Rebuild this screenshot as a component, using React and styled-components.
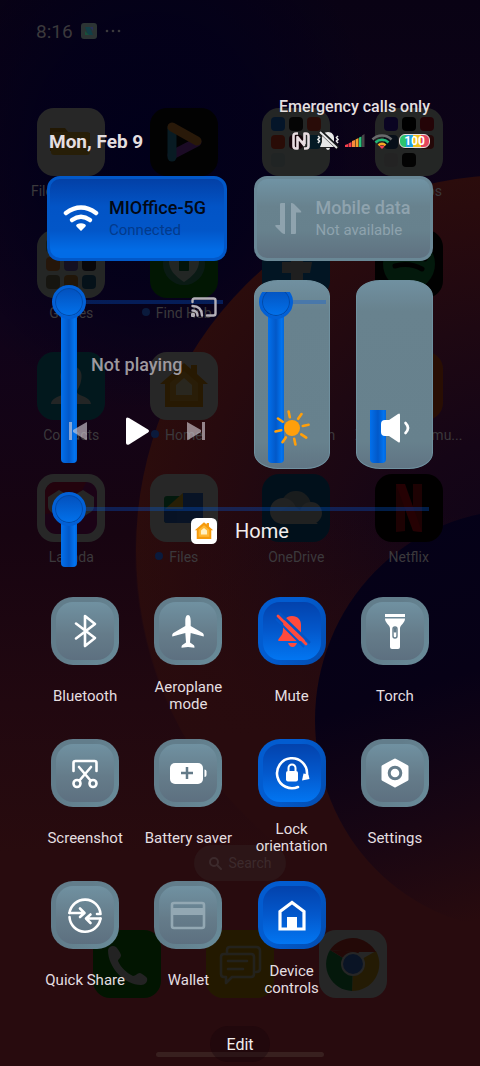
import React, { useState } from "react";
import styled, { createGlobalStyle, css } from "styled-components";

const App = () => {
  return (
    <>
      <GlobalStyle />
      <Screen>
        <Wallpaper />
        <HomeScreen />
        <ControlCentre />
      </Screen>
    </>
  );
};

const Wallpaper = () => (
  <StyledWallpaper viewBox="0 0 480 1066" preserveAspectRatio="none" aria-hidden="true">
    <defs>
      <linearGradient id="base" x1="0" y1="0" x2="0" y2="1">
        <stop offset="0" stopColor="#090214" />
        <stop offset="0.3" stopColor="#10031a" />
        <stop offset="0.5" stopColor="#170411" />
        <stop offset="0.66" stopColor="#210810" />
        <stop offset="0.8" stopColor="#280b0e" />
        <stop offset="1" stopColor="#280b0e" />
      </linearGradient>
      <radialGradient id="navy">
        <stop offset="0" stopColor="#01001a" />
        <stop offset="0.5" stopColor="#02001a" stopOpacity="0.8" />
        <stop offset="1" stopColor="#02001a" stopOpacity="0" />
      </radialGradient>
      <radialGradient id="planet" cx="0.5" cy="0.5" r="0.5">
        <stop offset="0" stopColor="#100418" />
        <stop offset="0.3" stopColor="#150516" />
        <stop offset="0.6" stopColor="#1e0812" />
        <stop offset="0.85" stopColor="#270a0e" />
        <stop offset="1" stopColor="#2b0c0c" />
      </radialGradient>
      <linearGradient id="planetFade" x1="0" y1="0" x2="0" y2="1">
        <stop offset="0.45" stopColor="#280b0e" stopOpacity="0" />
        <stop offset="0.75" stopColor="#280b0e" />
      </linearGradient>
      <linearGradient id="moon" x1="0.2" y1="0" x2="0.5" y2="1">
        <stop offset="0" stopColor="#040118" />
        <stop offset="0.4" stopColor="#070116" />
        <stop offset="0.7" stopColor="#180613" />
        <stop offset="0.95" stopColor="#280b0e" />
      </linearGradient>
    </defs>
    <rect width="480" height="1066" fill="url(#base)" />
    <ellipse cx="150" cy="150" rx="230" ry="260" fill="url(#navy)" />
    <circle cx="511" cy="550" r="375" fill="url(#planet)" />
    <circle cx="511" cy="550" r="376" fill="url(#planetFade)" />
    <ellipse cx="520" cy="720" rx="205" ry="210" fill="url(#moon)" />
  </StyledWallpaper>
);

/* ---------- home screen behind the panel ---------- */

const folder = (colors) => (
  <>
    <rect width="68" height="68" rx="17" fill="#e4ece8" />
    {colors.map((color, i) => (
      <rect
        key={i}
        x={9 + (i % 3) * 18}
        y={9 + Math.floor(i / 3) * 18}
        width="14"
        height="14"
        rx="4"
        fill={color}
      />
    ))}
  </>
);

const house = (
  <>
    <path d="M10 32 34 11l7 6v-4h6v9l11 10h-5v23H15V32z" fill="#f59a0c" />
    <path d="M20 49V31l14-12 14 12v18z" fill="#ffb733" />
    <path d="M26 43V33l8-7 8 7v10z" fill="#fff1c4" />
  </>
);

const apps = [
  {
    name: "File Manager",
    art: (
      <>
        <rect width="68" height="68" rx="17" fill="#f4f4f4" />
        <path d="M13 20h15l4 5h21v18H13z" fill="#d59411" />
        <rect x="14" y="24" width="39" height="23" rx="3" fill="#f3bd2b" />
      </>
    ),
  },
  {
    name: "Video",
    covered: true,
    art: (
      <>
        <rect width="68" height="68" rx="17" fill="#0b0b0e" />
        <g fill="none" strokeWidth="9" strokeLinecap="round">
          <path d="M22 47 47 34" stroke="#a645e8" />
          <path d="M22 20v29" stroke="#2fa8d8" />
          <path d="M22 19 47 33" stroke="#ff9c38" />
        </g>
      </>
    ),
  },
  {
    name: "Tools",
    covered: true,
    art: folder(["#1b86ff", "#222", "#ff4d32", "#ff4b2b", "#7a1535", "#1c9ce0", "#c9e2de"]),
  },
  {
    name: "More apps",
    art: folder(["#3d1bd2", "#000", "#e01b2c", "#2a5f9f", "#3d7a48", "#e03030", "#ddd", "#111"]),
  },
  {
    name: "Games",
    art: folder([
      "#7a8", "#a65", "#468", "#e58a40", "#7a66d0", "#33293f", "#8b8364", "#d08a36", "#226d9f",
    ]),
  },
  {
    name: "Find Hub",
    isNew: true,
    art: (
      <>
        <rect width="68" height="68" rx="17" fill="#0a8d12" />
        <circle cx="34" cy="34" r="21" fill="#3da580" />
        <path d="M34 52c-9-6-15-12-15-21a15 15 0 0 1 30 0c0 9-6 15-15 21z" fill="#d5eee4" />
        <rect x="29" y="26" width="10" height="15" rx="1" fill="#0a7d42" />
      </>
    ),
  },
  {
    name: "Facebook",
    covered: true,
    art: (
      <>
        <rect width="68" height="68" rx="17" fill="#0f86dc" />
        <path d="M29 53V43h-9V32h9v-4q0-14 20-12v11q-8 0-8 5h9l-2 11h-7v10z" fill="#c4c4c4" />
      </>
    ),
  },
  {
    name: "Spotify",
    covered: true,
    art: (
      <>
        <rect width="68" height="68" rx="17" fill="#060806" />
        <circle cx="34" cy="34" r="26" fill="#109c48" />
        <g fill="none" stroke="#050805" strokeWidth="5" strokeLinecap="round">
          <path d="M19 26q16-5 31 3" />
          <path d="M20 36q14-4 27 3" />
        </g>
      </>
    ),
  },
  {
    name: "Contacts",
    art: (
      <>
        <rect width="68" height="68" rx="17" fill="#0c99b5" />
        <path d="M34 14c9 0 12 7 10 15-1 6-4 8-4 11 0 4 13 4 14 12H14c1-8 14-8 14-12 0-3-3-5-4-11-2-8 1-15 10-15z" fill="#d9e6e8" />
      </>
    ),
  },
  {
    name: "Home",
    isNew: true,
    art: (
      <>
        <rect width="68" height="68" rx="17" fill="#f4f4f4" />
        {house}
      </>
    ),
  },
  { name: "Subscription", art: <rect width="68" height="68" rx="17" fill="#2b1018" /> },
  { name: "Xiaomi Commu...", art: <rect width="68" height="68" rx="17" fill="#ff5a14" /> },
  {
    name: "Lazada",
    art: (
      <>
        <rect width="68" height="68" rx="17" fill="#f4f4f4" />
        <rect x="8" y="8" width="52" height="52" rx="11" fill="#a8108a" />
        <path d="M8 40V19A11 11 0 0 1 19 8h30c-8 20-20 30-41 32z" fill="#d81450" />
        <path d="M34 50 14 38q-3-2-3-6v-9l11-7 12 7 12-7 11 7v9q0 4-3 6z" fill="#eee" />
      </>
    ),
  },
  {
    name: "Files",
    isNew: true,
    art: (
      <>
        <rect width="68" height="68" rx="17" fill="#f4f4f4" />
        <rect x="14" y="22" width="25" height="27" rx="3" fill="#119a54" />
        <rect x="14" y="34" width="39" height="15" rx="3" fill="#2c6fe0" />
        <path d="M33 19h20v30H27V35z" fill="#3479ea" />
        <path d="M33 19v16H15z" fill="#f7c01d" />
      </>
    ),
  },
  {
    name: "OneDrive",
    art: (
      <>
        <rect width="68" height="68" rx="17" fill="#0864a8" />
        <circle cx="34" cy="32" r="15" fill="#9fb0b8" />
        <circle cx="21" cy="37" r="13" fill="#d0d4d6" />
        <circle cx="49" cy="39" r="11" fill="#c6cdd0" />
        <path d="M18 50V38l12-8 26 20z" fill="#c6cdd0" />
      </>
    ),
  },
  {
    name: "Netflix",
    art: (
      <>
        <rect width="68" height="68" rx="17" fill="#080202" />
        <path d="M21 10h9v47l-9 1z" fill="#b50a14" />
        <path d="M38 10h9v48l-9-1z" fill="#b50a14" />
        <path d="M21 10h9l17 48-9-1z" fill="#e50914" />
      </>
    ),
  },
];

const dock = [
  {
    name: "Phone",
    art: (
      <>
        <rect width="68" height="68" rx="17" fill="#0d8408" />
        <path
          d="M15 20c1-4 5-5 8-3 2 2 4 5 5 8 0 3-3 4-3 6 3 7 9 12 15 15 3 0 4-3 7-3 3 1 5 3 7 5 1 4-2 7-6 7C32 55 15 38 15 20z"
          fill="#ddd"
        />
      </>
    ),
  },
  {
    name: "Messages",
    art: (
      <>
        <rect width="68" height="68" rx="17" fill="#d89e00" />
        <g fill="none" stroke="#ddd6b8" strokeWidth="2.5" strokeLinejoin="round" strokeLinecap="round">
          <path d="M21 24v-4q0-3 3-3h26q4 0 4 4v18q0 3-4 3" />
          <path d="M18 24h27q3 0 3 3v17q0 3-3 3H26l-6 6v-6h-2q-3 0-3-3V27q0-3 3-3z" />
          <path d="M22 31h19M22 39h15" />
        </g>
      </>
    ),
  },
  {
    name: "Chrome",
    art: (
      <>
        <rect width="68" height="68" rx="17" fill="#eee" />
        <path d="M34 34 57 21A27 27 0 0 1 33 61z" fill="#e0a81c" />
        <path d="M34 34 33 61A27 27 0 0 1 11 20z" fill="#179447" />
        <path d="M11 20a27 27 0 0 1 46 2H34z" fill="#d8392b" />
        <path d="M11 20 34 34 40 22z" fill="#d8392b" />
        <circle cx="34" cy="34" r="12" fill="#eee" />
        <circle cx="34" cy="34" r="10" fill="#3f7be8" />
      </>
    ),
  },
];

const HomeScreen = () => (
  <StyledHome>
    <HomeStatus>
      8:16
      <NoticeIcon viewBox="0 0 16 16" aria-hidden="true">
        <rect width="16" height="16" rx="3" fill="#2c3434" />
        <path d="M4 4h5l3 8H7z" fill="#123e46" />
        <path d="M4 12V8l4 4z" fill="#18503a" />
        <path d="M12 4v4L9 4z" fill="#28305c" />
      </NoticeIcon>
      <MoreDots viewBox="0 0 16 4" aria-hidden="true">
        <circle cx="2" cy="2" r="1.3" />
        <circle cx="8" cy="2" r="1.3" />
        <circle cx="14" cy="2" r="1.3" />
      </MoreDots>
    </HomeStatus>
    <AppGrid>
      {apps.map((app) => (
        <AppItem key={app.name}>
          <AppArt viewBox="0 0 68 68" role="img" aria-label={app.name}>
            {app.art}
          </AppArt>
          {!app.covered && <AppName $isNew={app.isNew}>{app.name}</AppName>}
        </AppItem>
      ))}
    </AppGrid>
    <SearchPill>
      <svg width="14" height="14" viewBox="0 0 14 14" fill="none" stroke="currentColor" strokeWidth="2" strokeLinecap="round" aria-hidden="true">
        <circle cx="6" cy="6" r="4" />
        <path d="m9 9 4 4" />
      </svg>
      Search
    </SearchPill>
    <Dock>
      {dock.map((app) => (
        <AppArt key={app.name} viewBox="0 0 68 68" role="img" aria-label={app.name}>
          {app.art}
        </AppArt>
      ))}
    </Dock>
    <NavHandle />
  </StyledHome>
);

/* ---------- control centre ---------- */

const line = {
  fill: "none",
  stroke: "currentColor",
  strokeLinecap: "round",
  strokeLinejoin: "round",
};

const toggles = [
  {
    label: "Bluetooth",
    icon: <path {...line} strokeWidth="2.6" d="M9 10.500 28 25 18 33V3l10 8L9 25.500" />,
  },
  {
    label: "Aeroplane mode",
    icon: (
      <path
        fill="currentColor"
        d="M18 2c2 0 2.700 3 2.700 6v5l12 7c1 .7 1.300 2 1 3.600l-13-3.600-.7 9.500 3.600 2.500c.8.600 1 1.600.8 2.800L18 34l-6.400.8c-.2-1.200 0-2.200.8-2.800l3.600-2.500-.7-9.500-13 3.600c-.3-1.600 0-2.900 1-3.600l12-7V8c0-3 .7-6 2.700-6z"
      />
    ),
  },
  {
    label: "Mute",
    on: true,
    icon: (
      <g fill="#ff4a3d">
        <path d="M18 3c6 0 9 4 9 9v8c0 3 4 5 4 8H5c-2 0 0-3 2-5 2-3 2-5 2-9C9 7 12 3 18 3z" />
        <path d="M14 30h9c-1 2-2 4-4.500 4S15 32 14 30z" />
        <path d="M5 0 36 30" stroke="#0354c4" strokeWidth="2.500" />
        <path d="M2 6 30 34" stroke="#0358cc" strokeWidth="2" />
        <path d="M4 3 32 31" stroke="#ff4a3d" strokeWidth="2.800" strokeLinecap="round" />
      </g>
    ),
  },
  {
    label: "Torch",
    icon: (
      <>
        <path fill="currentColor" d="M8 1h20v3H8zM8 5.500h20c0 5-5 6-5 10V34q0 2-2 2h-6q-2 0-2-2V15.500c0-4-5-5-5-10z" />
        <rect x="16" y="14" width="4" height="11" rx="2" fill="#fff" stroke="#657d8b" strokeWidth="1.400" />
        <rect x="16.500" y="14.500" width="3" height="5" rx="1" fill="#657d8b" />
      </>
    ),
  },
  {
    label: "Screenshot",
    icon: (
      <g {...line} strokeWidth="2.600">
        <path d="M6.500 16V8q0-2 2-2h19q2 0 2 2v8" />
        <path d="M12 12l11.500 13.500M24 12 12.500 25.500" />
        <circle cx="10" cy="28.500" r="3.500" />
        <circle cx="26" cy="28.500" r="3.500" />
      </g>
    ),
  },
  {
    label: "Battery saver",
    icon: (
      <>
        <rect x="0" y="8" width="33" height="21" rx="5" fill="currentColor" />
        <path d="M34.500 14.500q2 0 2 2v3.500q0 2-2 2z" fill="currentColor" />
        <path d="M17 12v12M11 18h12" stroke="#637a88" strokeWidth="2.500" />
      </>
    ),
  },
  {
    label: "Lock orientation",
    on: true,
    icon: (
      <>
        <path {...line} strokeWidth="2.600" d="M24 32A15 15 0 1 1 33 19" />
        <path d="M28 25.500 35.500 24l-1-4.500-5-1z" fill="currentColor" />
        <rect x="12" y="16" width="12" height="10.500" rx="2" fill="currentColor" />
        <path {...line} strokeWidth="2" d="M14.500 16v-3a3.500 3.500 0 0 1 7 0v3" />
      </>
    ),
  },
  {
    label: "Settings",
    icon: (
      <>
        <path {...line} fill="currentColor" strokeWidth="3" d="M18 5 30 11.500v13L18 31 6 24.500v-13z" />
        <circle cx="18" cy="18" r="5.800" fill="none" stroke="#657c8a" strokeWidth="3" />
      </>
    ),
  },
  {
    label: "Quick Share",
    icon: (
      <g {...line} strokeWidth="2.600">
        <path d="M2.500 16A15.600 15.600 0 0 1 33.500 17H30" />
        <path d="M2.500 16H17M13 11.500l4.500 4.500-4.500 4" />
        <path d="M2.500 20a15.600 15.600 0 0 0 31 1.500" />
        <path d="M33.500 21.500H19.500M23.500 17.500l-4.500 4 4.500 4.500" />
      </g>
    ),
  },
  {
    label: "Wallet",
    dim: true,
    icon: (
      <>
        <rect x="2" y="6" width="32" height="25" rx="2" fill="none" stroke="currentColor" strokeWidth="2.600" />
        <path d="M2 11h32v7H2z" fill="currentColor" />
      </>
    ),
  },
  {
    label: "Device controls",
    on: true,
    icon: (
      <>
        <path d="M6 32V14.500l12-9 12 9V32z" fill="none" stroke="currentColor" strokeWidth="3.200" />
        <path d="M13 20h10v12H13z" fill="currentColor" />
      </>
    ),
  },
];

const StatusIcons = () => (
  <IconRow aria-label="Status">
    <svg width="19" height="18" viewBox="0 0 19 18">
      <path
        d="M6 1.500H4q-2.500 0-2.500 2.500v10q0 2.500 2.500 2.500h1.500V5l6.500 8V8M12 16.500h2q2.500 0 2.500-2.500V4q0-2.500-2.500-2.500h-1.500V12"
        fill="none"
        stroke="#e8dce0"
        strokeWidth="2.600"
        strokeLinejoin="round"
      />
    </svg>
    <svg width="22" height="20" viewBox="0 0 22 20" fill="#e8e8e8">
      <path d="M11 1c4 0 6 3 6 6v4l2 5H3l2-5V7c0-3 2-6 6-6zM9 17h4q-.5 2-2 2t-2-2z" />
      <path d="m3 0 18 17" stroke="#161a1a" strokeWidth="4" />
      <path d="m3 1 17 16" stroke="#e8e8e8" strokeWidth="1.800" />
      <path d="m1 5 1.500 1.500L1 8.500 2.500 10 1 12M21 5l-1.500 1.500L21 8.500 19.500 10 21 12" fill="none" stroke="#e8e8e8" strokeWidth="1.600" />
    </svg>
    <svg width="20" height="14" viewBox="0 0 20 14">
      <path d="M0 13V11l3-1v3z" fill="#f6404e" />
      <path d="M3.500 13V9.500l3-1.500v5z" fill="#f6404e" />
      <path d="M7 13V7l3-1v7z" fill="#f88a3a" />
      <path d="M10.500 13V5.500l3-1.500v9z" fill="#f0a02c" />
      <path d="M14 13V3.500l2.500-1V13z" fill="#2ac27a" />
      <path d="M17 13V1.500L19.500 0v13z" fill="#4a4648" />
    </svg>
    <svg width="22" height="15" viewBox="0 0 22 15" fill="none" strokeWidth="2.500">
      <path d="M1.500 5.500a13.500 13.500 0 0 1 19 0" stroke="#6a6a6c" />
      <path d="M4.500 8.500a9.200 9.200 0 0 1 13 0" stroke="#22b877" />
      <path d="M7.500 11.300a5 5 0 0 1 7 0" stroke="#f5a623" />
      <path d="m11 15-2.500-2.500q2.500-2 5 0z" fill="#f6404e" />
    </svg>
    <Battery>100</Battery>
  </IconRow>
);

const ControlCentre = () => {
  const [brightness, setBrightness] = useState(100);
  const [volume, setVolume] = useState(31);

  return (
    <Panel>
      <Header>
        <Carrier>Emergency calls only</Carrier>
        <DateRow>
          <DateText>Mon, Feb 9</DateText>
          <StatusIcons />
        </DateRow>
      </Header>

      <Cards>
        <WideTile type="button" $on>
          <WideIcon viewBox="0 0 36 36" aria-hidden="true">
            <g fill="none" stroke="#fff" strokeWidth="4.500" strokeLinecap="round">
              <path d="M3 12q15-11 30 0" />
              <path d="M9 19q9-6.500 18 0" />
            </g>
            <path d="M18 30 13.500 25.500q-1-1.500.5-2.200 4-2 8 0 1.500.7.5 2.200z" fill="#fff" />
          </WideIcon>
          <span>
            <TileTitle>MIOffice-5G</TileTitle>
            <TileNote>Connected</TileNote>
          </span>
        </WideTile>
        <WideTile type="button">
          <WideIcon viewBox="0 0 36 36" aria-hidden="true">
            <path d="M10 3q0-1 1.500-1H15v31q-2 0-3-1l-6.500-6.500Q4.500 24 6 24h4zM21 2q2 0 3 1l7 7q1 1.500-.5 1.500H26V32q0 1-1 1h-4z" fill="currentColor" />
          </WideIcon>
          <span>
            <TileTitle>Mobile data</TileTitle>
            <TileNote>Not available</TileNote>
          </span>
        </WideTile>

        <Media>
          <Stick>
            <Rail />
            <Bar />
            <Knob />
          </Stick>
          <CastButton type="button" aria-label="Cast">
            <svg width="26" height="20" viewBox="0 0 26 20" fill="none" stroke="#b4b0b8" strokeWidth="2.400" strokeLinecap="round" aria-hidden="true">
              <path d="M1.500 5V3.500q0-2 2-2h19q2 0 2 2v13q0 2-2 2H16" />
              <path d="M1.500 9q9 0 9.500 9.500M1.500 13.500q5 0 5 5" />
              <circle cx="2" cy="18" r="1" />
            </svg>
          </CastButton>
          <MediaTitle>Not playing</MediaTitle>
          <MediaButtons>
            <MediaButton type="button" aria-label="Previous">
              <svg width="20" height="20" viewBox="0 0 20 20" fill="currentColor" aria-hidden="true">
                <path d="M1 1h3v18H1zM18 1.500q1-1 1 .5v16q0 1.500-1 1L5 11V9z" />
              </svg>
            </MediaButton>
            <MediaButton type="button" aria-label="Play" $main>
              <svg width="26" height="28" viewBox="0 0 26 28" fill="currentColor" aria-hidden="true">
                <path d="M2 2q0-2.500 3-1l19 11.500q2 1.500 0 3L5 27.500q-3 1-3-1.500z" />
              </svg>
            </MediaButton>
            <MediaButton type="button" aria-label="Next">
              <svg width="20" height="20" viewBox="0 0 20 20" fill="currentColor" aria-hidden="true">
                <path d="M16 1h3v18h-3zM2 1.500q-1-1-1 .5v16q0 1.500 1 1L15 11V9z" />
              </svg>
            </MediaButton>
          </MediaButtons>
        </Media>

        <Levels>
          <Level>
            <LevelClip>
              <Stick $inset>
                <Rail />
                <Bar />
                <Knob />
              </Stick>
            </LevelClip>
            <LevelIcon viewBox="0 0 36 36" aria-hidden="true">
              <circle cx="18" cy="18" r="8" fill="#ff9f0a" />
              <g stroke="#ff9f0a" strokeWidth="2.600" strokeLinecap="round">
                <path d="M15.800 7.300 14.600 1.500M24.200 8.800 27.500 4M28.800 15.900 34.600 14.700M27.300 24.300 32.200 27.600M20.200 28.800 21.400 34.500M11.800 27.400 8.500 32.200M7.200 20.200 1.500 21.400M8.700 11.800 4 8.500" />
              </g>
            </LevelIcon>
            <LevelInput
              aria-label="Brightness"
              value={brightness}
              onChange={(e) => setBrightness(e.target.value)}
            />
          </Level>
          <Level>
            <LevelClip>
              <VolumeFill style={{ height: `${volume}%` }} />
            </LevelClip>
            <LevelIcon viewBox="0 0 36 36" aria-hidden="true">
              <path d="M4 14q0-4 4-4h4l9-6q2-1.500 2 1v26q0 2.500-2 1l-9-6H8q-4 0-4-4z" fill="#fff" />
              <path d="M28.500 13q5 5 0 10" fill="none" stroke="#fff" strokeWidth="2.600" strokeLinecap="round" />
            </LevelIcon>
            <LevelInput
              aria-label="Volume"
              value={volume}
              onChange={(e) => setVolume(e.target.value)}
            />
          </Level>
        </Levels>
      </Cards>

      <HomeRow>
        <Stick $short>
          <Rail />
          <Bar />
          <Knob />
        </Stick>
        <HomeButton type="button">
          <svg width="26" height="26" viewBox="0 0 68 68" aria-hidden="true">
            <rect width="68" height="68" rx="14" fill="#fff" />
            {house}
          </svg>
          Home
        </HomeButton>
      </HomeRow>

      <Toggles>
        {toggles.map((toggle) => (
          <Toggle key={toggle.label} type="button" aria-pressed={!!toggle.on}>
            <ToggleFace $on={toggle.on} $dim={toggle.dim}>
              <svg width="36" height="36" viewBox="0 0 36 36" overflow="visible" aria-hidden="true">
                {toggle.icon}
              </svg>
            </ToggleFace>
            <ToggleLabel>{toggle.label}</ToggleLabel>
          </Toggle>
        ))}
      </Toggles>

      <EditButton type="button">Edit</EditButton>
    </Panel>
  );
};

const GlobalStyle = createGlobalStyle`
  * {
    box-sizing: border-box;
  }
  body {
    margin: 0;
    background: #090214;
    font-family: Roboto, "Noto Sans", sans-serif;
  }
  button {
    padding: 0;
    border: 0;
    background: none;
    color: inherit;
    font: inherit;
  }
  svg {
    display: block;
  }
`;

const Screen = styled.main`
  position: relative;
  min-height: 100vh;
  overflow: hidden;
`;

const StyledWallpaper = styled.svg`
  position: absolute;
  inset: 0;
  width: 100%;
  height: 100%;
`;

const StyledHome = styled.div`
  position: absolute;
  inset: 0;
  display: flex;
  flex-direction: column;
  align-items: center;
  padding-bottom: 9px;
  color: #3b393c;
`;

const HomeStatus = styled.div`
  align-self: stretch;
  display: flex;
  align-items: center;
  gap: 8px;
  height: 62px;
  padding-left: 36px;
  font-size: 19px;
`;

const NoticeIcon = styled.svg`
  width: 16px;
  height: 16px;
`;

const MoreDots = styled.svg`
  width: 16px;
  height: 4px;
  fill: currentColor;
`;

const AppGrid = styled.div`
  align-self: stretch;
  display: grid;
  grid-template-columns: repeat(4, 1fr);
  grid-auto-rows: 122px;
  margin-top: 46px;
  padding: 0 15px;
`;

const AppItem = styled.div`
  display: flex;
  flex-direction: column;
  align-items: center;
  gap: 6px;
`;

const AppArt = styled.svg`
  width: 68px;
  height: 68px;
  filter: brightness(0.16);
`;

const AppName = styled.span`
  position: relative;
  font-size: 14px;
  line-height: 18px;
  white-space: nowrap;

  ${(props) =>
    props.$isNew &&
    css`
      &::before {
        content: "";
        position: absolute;
        top: 4px;
        left: -14px;
        width: 8px;
        height: 8px;
        border-radius: 50%;
        background: #0a1a3c;
      }
    `}
`;

const SearchPill = styled.div`
  display: flex;
  align-items: center;
  gap: 6px;
  height: 36px;
  margin-top: auto;
  padding: 0 14px;
  border-radius: 18px;
  background: #2c1517;
  color: #3c2a2c;
  font-size: 14px;
`;

const Dock = styled.div`
  display: flex;
  gap: 45px;
  margin-top: 49px;
`;

const NavHandle = styled.div`
  width: 168px;
  height: 5px;
  margin-top: 54px;
  border-radius: 3px;
  background: #38201f;
`;

const Panel = styled.section`
  position: relative;
  display: flex;
  flex-direction: column;
  padding: 96px 47px 4px;
  color: #e4dfe0;
`;

const Header = styled.header`
  display: flex;
  flex-direction: column;
  padding: 0 3px 0 2px;
`;

const Carrier = styled.span`
  align-self: flex-end;
  font-size: 16px;
  font-weight: 500;
  line-height: 22px;
`;

const DateRow = styled.div`
  display: flex;
  align-items: center;
  justify-content: space-between;
  height: 46px;
`;

const DateText = styled.span`
  font-size: 19px;
  font-weight: 700;
`;

const IconRow = styled.div`
  display: flex;
  align-items: center;
  gap: 6px;
`;

const Battery = styled.span`
  width: 31px;
  height: 14px;
  border: 1px solid #e6dede;
  border-radius: 6px;
  background: linear-gradient(90deg, #2cc46e 0 20%, #1fa2dc 20% 45%, #f2c21d 45% 72%, #e2445c 72%);
  color: #fff;
  font-size: 12px;
  font-weight: 700;
  line-height: 12px;
  text-align: center;
`;

const Cards = styled.div`
  display: grid;
  grid-template-columns: 1fr 1fr;
  gap: 19px 27px;
  margin-top: 12px;
`;

const WideTile = styled.button`
  display: flex;
  align-items: center;
  gap: 10px;
  height: 85px;
  padding-left: 13px;
  border: 3px solid ${(props) => (props.$on ? "#0258c8" : "#6a8896")};
  border-radius: 13px;
  background: ${(props) =>
    props.$on
      ? "linear-gradient(#0340a6, #0254c6 35%, #0256c8 65%, #026ce6 90%)"
      : "linear-gradient(#7093a4, #68828e 35%, #67818d 65%, #5f7180)"};
  color: ${(props) => (props.$on ? "#020814" : "#8fa3ae")};
  text-align: left;

  small {
    color: ${(props) => (props.$on ? "#023a8c" : "#8fa3ae")};
  }
`;

const WideIcon = styled.svg`
  width: 36px;
  height: 36px;
`;

const TileTitle = styled.strong`
  display: block;
  font-size: 18px;
  font-weight: 500;
  line-height: 22px;
`;

const TileNote = styled.small`
  display: block;
  font-size: 15px;
  line-height: 22px;
`;

const Media = styled.div`
  position: relative;
  display: flex;
  flex-direction: column;
  height: 189px;
  padding-top: 17px;
`;

const CastButton = styled.button`
  position: relative;
  align-self: flex-end;
  height: 20px;
  margin-right: 10px;
`;

const MediaTitle = styled.span`
  position: relative;
  margin-top: 36px;
  color: #9d999f;
  font-size: 18px;
  font-weight: 500;
  line-height: 24px;
  text-align: center;
`;

const MediaButtons = styled.div`
  position: relative;
  display: flex;
  align-items: center;
  justify-content: space-between;
  margin-top: 40px;
  padding: 0 21px;
`;

const MediaButton = styled.button`
  color: ${(props) => (props.$main ? "#fff" : "rgba(214, 208, 216, 0.62)")};
`;

/* slider skin: a knob on a rod, with a thin rail to its right */
const Stick = styled.div`
  position: absolute;
  top: ${(props) => (props.$short ? "23px" : props.$inset ? "-7px" : "5px")};
  right: ${(props) => (props.$inset ? "0" : "4px")};
  left: ${(props) => (props.$inset ? "1px" : "5px")};
  height: ${(props) => (props.$short ? "75px" : "178px")};
`;

const Rail = styled.div`
  position: absolute;
  top: 15px;
  right: 0;
  left: 17px;
  height: 4px;
  background: rgba(2, 90, 220, 0.32);
`;

const barSkin = css`
  width: 16px;
  border-radius: 0 0 4px 4px;
  background: linear-gradient(90deg, #0270ec, #0258c8 50%, #0274f0 85%, #0268dc);
`;

const Bar = styled.div`
  ${barSkin}
  position: absolute;
  top: 20px;
  bottom: 0;
  left: 9px;
`;

const Knob = styled.div`
  position: absolute;
  top: 0;
  left: 0;
  width: 34px;
  height: 34px;
  border: 3px solid #0260d6;
  border-radius: 50%;
  background: linear-gradient(#0350bc, #0272ec);
  box-shadow: inset 0 0 0 1px #034aa8;
`;

const Levels = styled.div`
  display: grid;
  grid-template-columns: 1fr 1fr;
  gap: 26px;
`;

const Level = styled.div`
  position: relative;
  display: flex;
  align-items: flex-end;
  justify-content: center;
  height: 189px;
  padding-bottom: 22px;
  border: 1px solid #6f909f;
  border-radius: 24px / 16px;
  background: linear-gradient(#7090a0, #68828e 16%, #67818d 86%, #607483);
`;

const LevelClip = styled.div`
  position: absolute;
  inset: 11px 3px 5px;
  overflow: hidden;
`;

const VolumeFill = styled.div`
  ${barSkin}
  position: absolute;
  bottom: 0;
  left: 10px;
`;

const LevelIcon = styled.svg`
  position: relative;
  width: 36px;
  height: 36px;
`;

const LevelInput = styled.input.attrs({ type: "range" })`
  position: absolute;
  inset: 0;
  width: 100%;
  height: 100%;
  margin: 0;
  opacity: 0;
  writing-mode: vertical-lr;
  direction: rtl;
`;

const HomeRow = styled.div`
  position: relative;
  display: flex;
  align-items: center;
  justify-content: center;
  height: 124px;
  margin-bottom: 4px;
`;

const HomeButton = styled.button`
  position: relative;
  display: flex;
  align-items: center;
  gap: 18px;
  color: #f2eeee;
  font-size: 20px;
  line-height: 26px;
`;

const Toggles = styled.div`
  display: grid;
  grid-template-columns: repeat(4, 1fr);
  gap: 26px 27px;
`;

const Toggle = styled.button`
  display: flex;
  flex-direction: column;
  align-items: center;
  gap: 14px;
`;

const ToggleFace = styled.span`
  position: relative;
  display: flex;
  align-items: center;
  justify-content: center;
  width: 68px;
  height: 68px;
  border-radius: 22px;
  background: ${(props) =>
    props.$on
      ? "linear-gradient(120deg, #025cd0 40%, #034cae)"
      : "linear-gradient(120deg, #627d8b 40%, #698c9a)"};
  color: ${(props) => (props.$dim ? "#93a8b3" : "#fff")};

  &::before {
    content: "";
    position: absolute;
    inset: 5px;
    border-radius: 17px;
    background: ${(props) =>
      props.$on
        ? "linear-gradient(#0342ac, #0358cc 50%, #0276f2)"
        : "linear-gradient(#7091a1, #657c8a 55%, #5d7080)"};
  }

  svg {
    position: relative;
  }
`;

const ToggleLabel = styled.span`
  display: flex;
  align-items: center;
  justify-content: center;
  min-height: 34px;
  width: 92px;
  margin: 0 -8px;
  font-size: 15px;
  line-height: 17px;
`;

const EditButton = styled.button`
  align-self: center;
  width: 60px;
  height: 36px;
  margin-top: 29px;
  border-radius: 18px;
  background: rgba(20, 4, 8, 0.35);
  color: #f2eeee;
  font-size: 16px;
`;

export default App;
